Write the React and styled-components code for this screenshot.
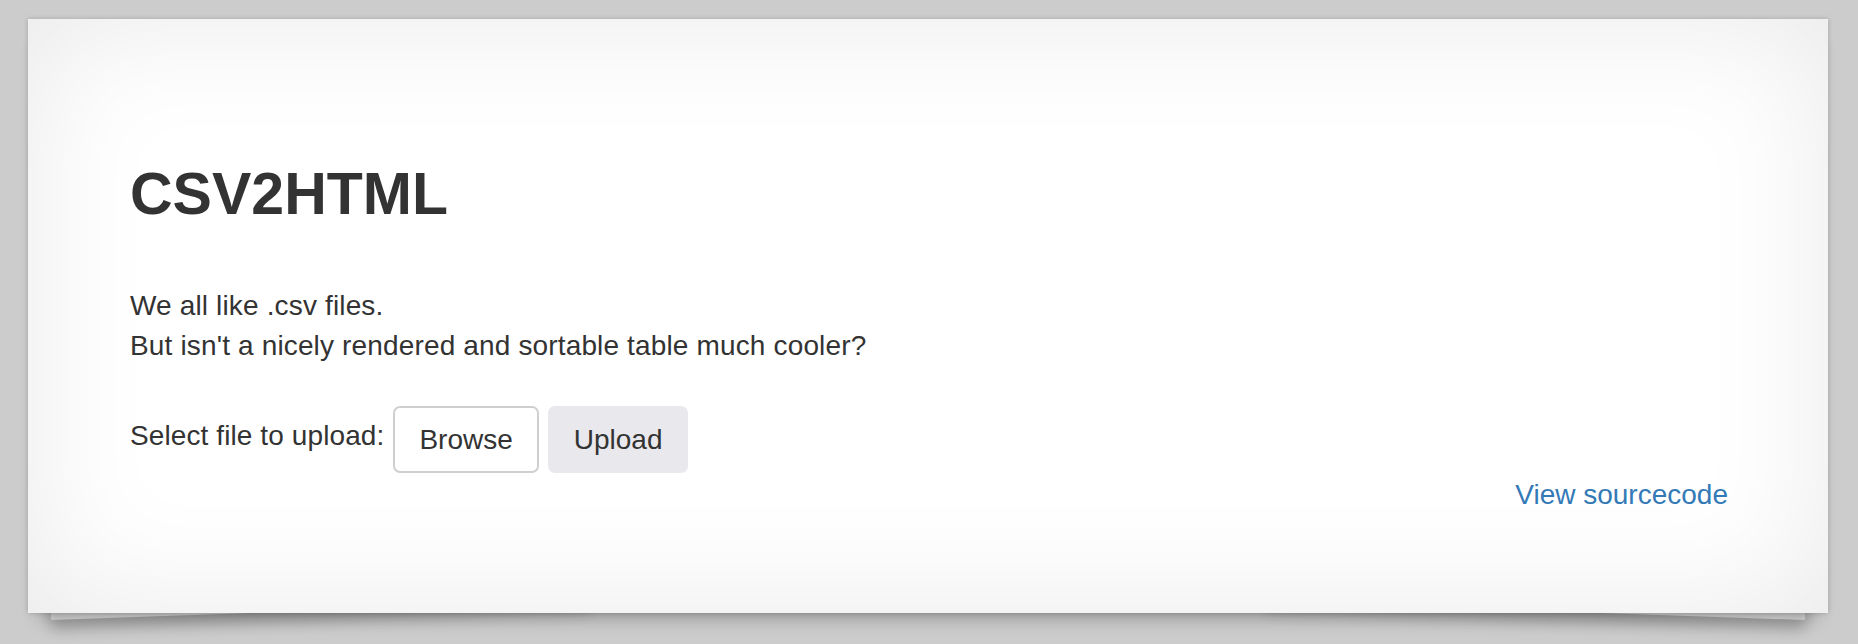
import styled, { createGlobalStyle } from 'styled-components';

const GlobalStyle = createGlobalStyle`
  html {
    background: #cccccc;
  }
  body {
    margin: 0;
    min-height: 100vh;
    font-family: "Liberation Sans", Arial, Helvetica, sans-serif;
    color: #333333;
  }
`;

const Page = styled.div`
  padding: 19px 0 0 28px;
`;

const Card = styled.div`
  position: relative;
  box-sizing: border-box;
  width: 1800px;
  height: 594px;
  padding: 143px 100px 0 102px;
  background: #ffffff;
  box-shadow: inset 0 0 130px rgba(0, 0, 0, 0.09), 0 0 5px rgba(0, 0, 0, 0.18),
    0 16px 18px -12px rgba(0, 0, 0, 0.3);

  /* lifted paper corners under the card */
  &::before,
  &::after {
    content: '';
    position: absolute;
    z-index: -1;
    bottom: -7px;
    width: 30%;
    height: 24px;
    background: #d9d9d9;
    box-shadow: 0 10px 14px rgba(0, 0, 0, 0.2);
  }
  &::before {
    left: 23px;
    transform-origin: left bottom;
    transform: rotate(-2deg);
  }
  &::after {
    right: 23px;
    transform-origin: right bottom;
    transform: rotate(2deg);
  }
`;

const Content = styled.div`
  position: relative;
  z-index: 1;
`;

const Title = styled.h1`
  margin: 0 0 59px;
  font-size: 59px;
  line-height: 65px;
  font-weight: 700;
  color: #333333;
`;

const Intro = styled.p`
  margin: 0 0 40px;
  font-size: 28px;
  line-height: 40px;
  letter-spacing: 0.15px;
`;

const UploadRow = styled.form`
  display: flex;
  align-items: flex-start;
  gap: 9px;
  margin: 0;
`;

const Label = styled.label`
  margin-top: 10px;
  font-size: 28px;
  line-height: 40px;
  letter-spacing: 0.1px;
`;

const Button = styled.button`
  box-sizing: border-box;
  height: 67px;
  padding: 0 24px;
  border: 2px solid ${(p) => (p.$primary ? '#e9e9ed' : '#cfcfcf')};
  border-radius: 7px;
  background: ${(p) => (p.$primary ? '#e9e9ed' : '#ffffff')};
  color: #333333;
  font-family: "Liberation Sans", Arial, Helvetica, sans-serif;
  font-size: 28px;
  line-height: 63px;
  cursor: pointer;
`;

const Footer = styled.div`
  margin-top: 2px;
  text-align: right;
`;

const SourceLink = styled.a`
  font-size: 28px;
  line-height: 40px;
  color: #337ab7;
  text-decoration: none;
`;

export default function App() {
  return (
    <>
      <GlobalStyle />
      <Page>
        <Card>
          <Content>
            <Title>CSV2HTML</Title>
            <Intro>
              We all like .csv files.
              <br />
              But isn't a nicely rendered and sortable table much cooler?
            </Intro>
            <UploadRow onSubmit={(e) => e.preventDefault()}>
              <Label>Select file to upload:</Label>
              <Button type="button">Browse</Button>
              <Button type="submit" $primary>
                Upload
              </Button>
            </UploadRow>
            <Footer>
              <SourceLink href="#">View sourcecode</SourceLink>
            </Footer>
          </Content>
        </Card>
      </Page>
    </>
  );
}
